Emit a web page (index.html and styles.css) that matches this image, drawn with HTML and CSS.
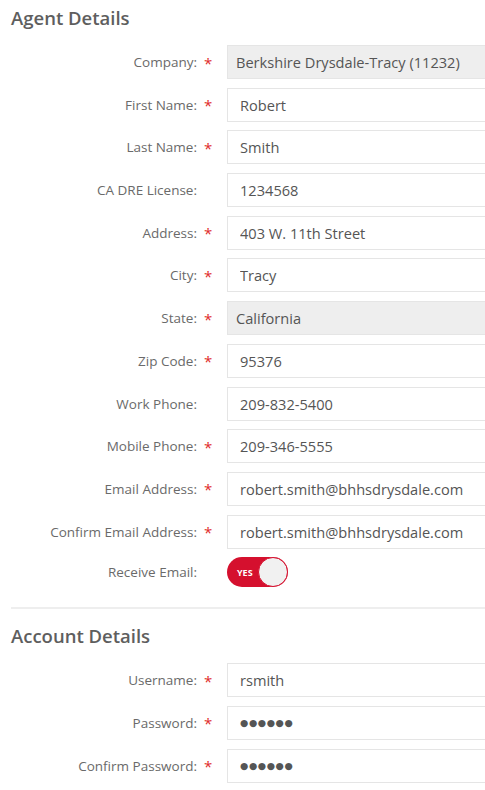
FILE: index.html
```html
<!DOCTYPE html>
<html lang="en">
<head>
    <meta charset="UTF-8" />
    <meta name="viewport" content="width=device-width, initial-scale=1.0"/>
    <title>Agent Details</title>

    <link rel="stylesheet" href="styles.css">
</head>
<body>

    <form class="profile-form">
        <h3 class="section-title">Agent Details</h3>

        <div class="form-row">
            <label class="form-label">Company:</label>
            <span class="req">*</span>
            <input class="form-input" type="text" value="Berkshire Drysdale-Tracy (11232)" disabled>
        </div>
        <div class="form-row">
            <label class="form-label">First Name:</label>
            <span class="req">*</span>
            <input class="form-input" type="text" value="Robert">
        </div>
        <div class="form-row">
            <label class="form-label">Last Name:</label>
            <span class="req">*</span>
            <input class="form-input" type="text" value="Smith">
        </div>
        <div class="form-row">
            <label class="form-label">CA DRE License:</label>
            <span class="req"></span>
            <input class="form-input" type="text" value="1234568">
        </div>
        <div class="form-row">
            <label class="form-label">Address:</label>
            <span class="req">*</span>
            <input class="form-input" type="text" value="403 W. 11th Street">
        </div>
        <div class="form-row">
            <label class="form-label">City:</label>
            <span class="req">*</span>
            <input class="form-input" type="text" value="Tracy">
        </div>
        <div class="form-row">
            <label class="form-label">State:</label>
            <span class="req">*</span>
            <input class="form-input" type="text" value="California" disabled>
        </div>
        <div class="form-row">
            <label class="form-label">Zip Code:</label>
            <span class="req">*</span>
            <input class="form-input" type="text" value="95376">
        </div>
        <div class="form-row">
            <label class="form-label">Work Phone:</label>
            <span class="req"></span>
            <input class="form-input" type="text" value="209-832-5400">
        </div>
        <div class="form-row">
            <label class="form-label">Mobile Phone:</label>
            <span class="req">*</span>
            <input class="form-input" type="text" value="209-346-5555">
        </div>
        <div class="form-row">
            <label class="form-label">Email Address:</label>
            <span class="req">*</span>
            <input class="form-input" type="text" value="robert.smith@bhhsdrysdale.com">
        </div>
        <div class="form-row">
            <label class="form-label">Confirm Email Address:</label>
            <span class="req">*</span>
            <input class="form-input" type="text" value="robert.smith@bhhsdrysdale.com">
        </div>
        <div class="form-row toggle-row">
            <label class="form-label">Receive Email:</label>
            <span class="req"></span>
            <div class="switch on">
                <span class="switch-text">YES</span>
                <span class="switch-knob"></span>
            </div>
        </div>

        <hr class="divider">

        <h3 class="section-title">Account Details</h3>

        <div class="form-row">
            <label class="form-label">Username:</label>
            <span class="req">*</span>
            <input class="form-input" type="text" value="rsmith">
        </div>
        <div class="form-row">
            <label class="form-label">Password:</label>
            <span class="req">*</span>
            <div class="form-input dots">●●●●●●</div>
        </div>
        <div class="form-row">
            <label class="form-label">Confirm Password:</label>
            <span class="req">*</span>
            <div class="form-input dots">●●●●●●</div>
        </div>
    </form>

</body>
</html>
```

FILE: styles.css
```css
body {
    margin: 0;
    background: #fff;
    font-family: "Open Sans", "Liberation Sans", sans-serif;
    overflow: hidden;
}

.profile-form {
    padding: 0 0 0 11px;
    width: 560px;
}

.section-title {
    margin: 6px 0 15px;
    font-size: 18.5px;
    line-height: 24px;
    font-weight: 600;
    color: #5e5e5e;
}

.form-row {
    display: flex;
    align-items: center;
    height: 34px;
    margin-bottom: 8.7px;
    margin-left: -11px;
}

.form-label {
    width: 197px;
    text-align: right;
    font-size: 13.5px;
    color: #6a6a6a;
}

.req {
    width: 30px;
    padding-left: 7px;
    box-sizing: border-box;
    font-size: 15px;
    color: #e02a2a;
    line-height: 1;
    position: relative;
    top: 1px;
}

.form-input {
    box-sizing: border-box;
    width: 290px;
    height: 34px;
    padding: 0 12px;
    border: 1px solid #e5e5e5;
    background: #fff;
    font-family: inherit;
    font-size: 14.6px;
    color: #555;
    outline: none;
}

.form-input:disabled {
    background: #eeeeee;
    padding-left: 8px;
    color: #555;
    -webkit-text-fill-color: #555;
}

.dots {
    display: flex;
    align-items: center;
    font-family: "DejaVu Sans", sans-serif;
    font-size: 9.5px;
    letter-spacing: 0.6px;
    color: #555;
}

.toggle-row {
    height: 30px;
}

.switch {
    box-sizing: border-box;
    display: flex;
    align-items: center;
    justify-content: space-between;
    width: 61px;
    height: 30px;
    border-radius: 15px;
    background: #d5102e;
    padding: 0 0 0 10px;
}

.switch-text {
    font-size: 9px;
    font-weight: 700;
    color: #fff;
}

.switch-knob {
    box-sizing: border-box;
    width: 30px;
    height: 30px;
    border-radius: 50%;
    background: #f1f1f1;
    border: 1px solid #d5102e;
}

.divider {
    margin: 20px 0 15px;
    border: 0;
    border-top: 2px solid #eeeeee;
}
```
